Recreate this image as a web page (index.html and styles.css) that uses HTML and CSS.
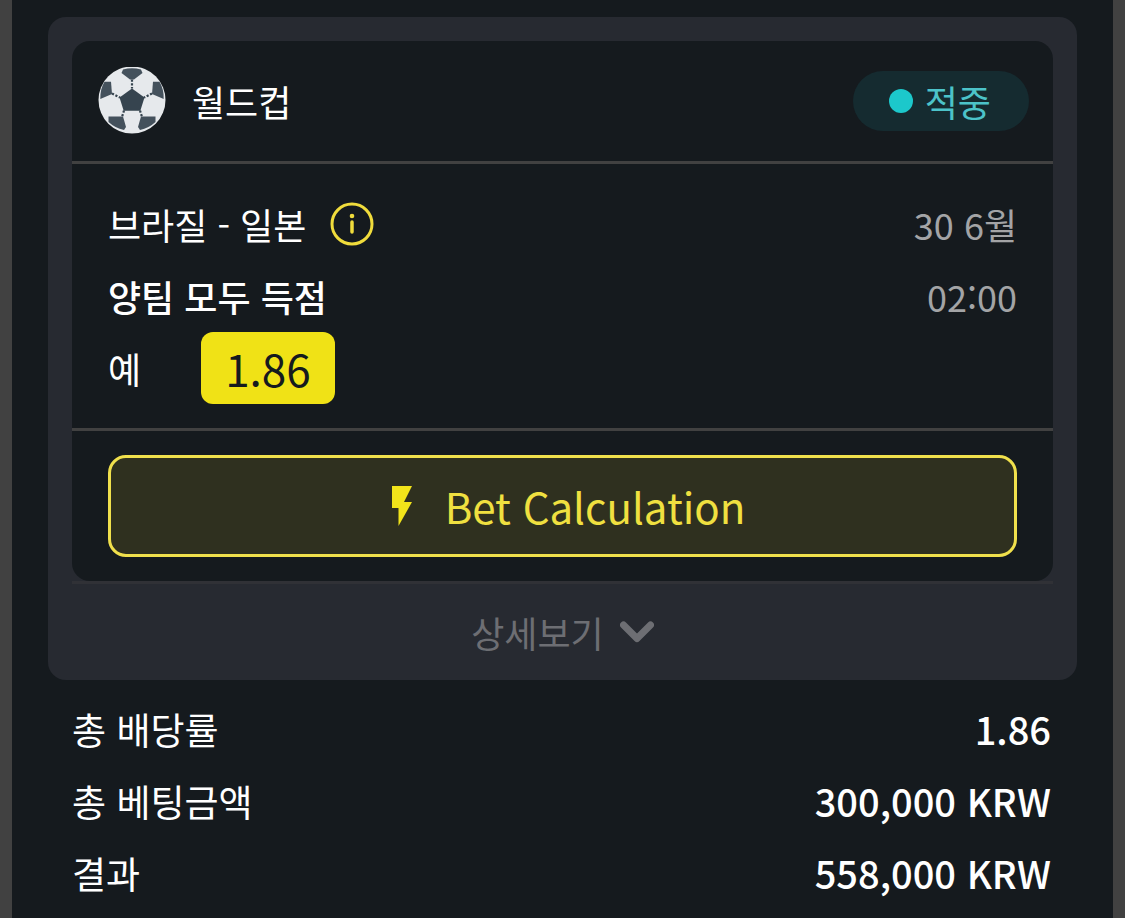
FILE: index.html
```html
<!DOCTYPE html>
<html lang="ko">
<head>
<meta charset="utf-8">
<meta name="viewport" content="width=device-width, initial-scale=1">
<title>월드컵</title>
<link rel="stylesheet" href="styles.css">
</head>
<body>
<main class="sheet">
  <section class="coupon">
    <article class="bet">
      <header class="bet-head">
        <svg class="ball" viewBox="0 0 68 68" aria-hidden="true">
          <circle cx="34" cy="33" r="33.500" fill="#e6e9ec"/>
          <g fill="#44515c">
            <path d="M23.500 6L25 2.500Q34 0 43 2.500L44.500 6L36 12.500H32L23.500 6Z"/>
            <path d="M6.500 14.800H13L14 27L2.300 32Q2 22.500 6.500 14.800Z"/>
            <path d="M61.500 14.800H55L54 27L65.700 32Q66 22.500 61.500 14.800Z"/>
            <path d="M10.500 49.500H25L28 60L26 63Q17 61 10.500 55Z"/>
            <path d="M57.500 49.500H43L40 60L42 63Q51 61 57.500 55Z"/>
          </g>
          <path d="M34 21.500L46.500 30.500L42.300 43.800H25.700L21.500 30.500Z" fill="#36444f"/>
          <path d="M34 12.500V21.500M14 26.500L22 30.500M54 26.500L46 30.500M26 43.500L24 50M42 43.500L44 50" fill="none" stroke="#36444f" stroke-width="2.200" stroke-dasharray="2.200 1.600"/>
        </svg>
        <h1 class="league">월드컵</h1>
        <span class="status"><span class="dot"></span>적중</span>
      </header>
      <div class="bet-body">
        <div class="row">
          <span>브라질 - 일본</span>
          <button class="info" type="button" aria-label="정보">
            <svg viewBox="0 0 44 44" aria-hidden="true"><circle cx="22" cy="22" r="20" fill="none" stroke="#f0dc3c" stroke-width="3"/><circle cx="22" cy="14" r="2.300" fill="#f0dc3c"/><path d="M22 20V30" stroke="#f0dc3c" stroke-width="3.500" stroke-linecap="round"/></svg>
          </button>
          <span class="when">30 6월</span>
        </div>
        <div class="row">
          <strong class="market">양팀 모두 득점</strong>
          <time class="when">02:00</time>
        </div>
        <div class="row">
          <span class="pick">예</span>
          <span class="odds">1.86</span>
        </div>
      </div>
      <div class="bet-foot">
        <button class="calc" type="button">
          <svg class="bolt" viewBox="-12 0 32 40" aria-hidden="true"><path d="M0 0H20L12 16H20L6.500 40V22H0Z" fill="#f2e41a"/></svg>
          Bet Calculation
        </button>
      </div>
    </article>
    <button class="more" type="button">
      상세보기
      <svg class="chevron" viewBox="0 0 34 22" aria-hidden="true"><path d="M3.500 4L17 17.500L30.500 4" fill="none" stroke="#6d6e73" stroke-width="7" stroke-linecap="round" stroke-linejoin="round"/></svg>
    </button>
  </section>
  <dl class="totals">
    <div class="total"><dt>총 배당률</dt><dd>1.86</dd></div>
    <div class="total"><dt>총 베팅금액</dt><dd>300,000 KRW</dd></div>
    <div class="total"><dt>결과</dt><dd>558,000 KRW</dd></div>
  </dl>
</main>
</body>
</html>
```

FILE: styles.css
```css
* { box-sizing: border-box; }

body {
  margin: 0;
  background: #414141;
  color: #fff;
  font: 36px/1 "Noto Sans CJK KR", sans-serif;
}

button {
  margin: 0;
  padding: 0;
  border: 0;
  background: none;
  color: inherit;
  font: inherit;
  cursor: pointer;
}

svg { display: block; flex: none; }

.sheet {
  min-height: 100vh;
  margin: 0 12px;
  padding: 17px 36px 8px;
  background: #151a1e;
}

.coupon {
  padding: 24px 24px 0;
  border-radius: 18px;
  background: #272a31;
}

.bet {
  border-radius: 18px;
  background: #151a1e;
}

.bet-head {
  display: flex;
  align-items: center;
  height: 123px;
  padding: 0 24px 0 26px;
  border-bottom: 3px solid #414141;
}

.ball { width: 68px; height: 68px; }

.league {
  margin: 0 0 0 26px;
  font-size: 36px;
  font-weight: 400;
}

.status {
  display: flex;
  align-items: center;
  gap: 12px;
  height: 60px;
  margin-left: auto;
  padding: 0 38px 0 36px;
  border-radius: 30px;
  background: #152b30;
  color: #4cc3c9;
}

.dot {
  width: 24px;
  height: 24px;
  border-radius: 50%;
  background: #1cc8cb;
}

.bet-body {
  padding: 24px 36px;
  border-bottom: 3px solid #414141;
}

.row {
  display: flex;
  align-items: center;
  height: 72px;
}

.info { margin-left: 24px; }
.info svg { width: 44px; height: 44px; }

.when {
  margin-left: auto;
  color: #a3a4a6;
}

.market { font-weight: 500; }

.odds {
  margin-left: 60px;
  padding: 0 24px;
  border-radius: 12px;
  background: #f0e216;
  color: #151a1e;
  font-size: 44px;
  line-height: 72px;
}

.bet-foot { padding: 24px 36px; }

.calc {
  display: flex;
  align-items: center;
  justify-content: center;
  gap: 33px;
  width: 100%;
  height: 102px;
  border: 3px solid #f0e04c;
  border-radius: 18px;
  background: #2f301f;
  color: #f0e040;
  font-size: 42px;
}

.bolt { width: 32px; height: 40px; }

.more {
  display: flex;
  align-items: center;
  justify-content: center;
  gap: 16px;
  width: 100%;
  height: 99px;
  border-top: 3px solid #303136;
  color: #6d6e73;
}

.chevron { width: 34px; height: 22px; }

.totals {
  margin: 13px 0 0;
  padding: 0 26px 0 24px;
}

.total {
  display: flex;
  align-items: center;
  justify-content: space-between;
  height: 72px;
}

.total dt { font-size: 37px; }

.total dd {
  margin: 0;
  font-size: 38px;
  font-weight: 500;
}
```
